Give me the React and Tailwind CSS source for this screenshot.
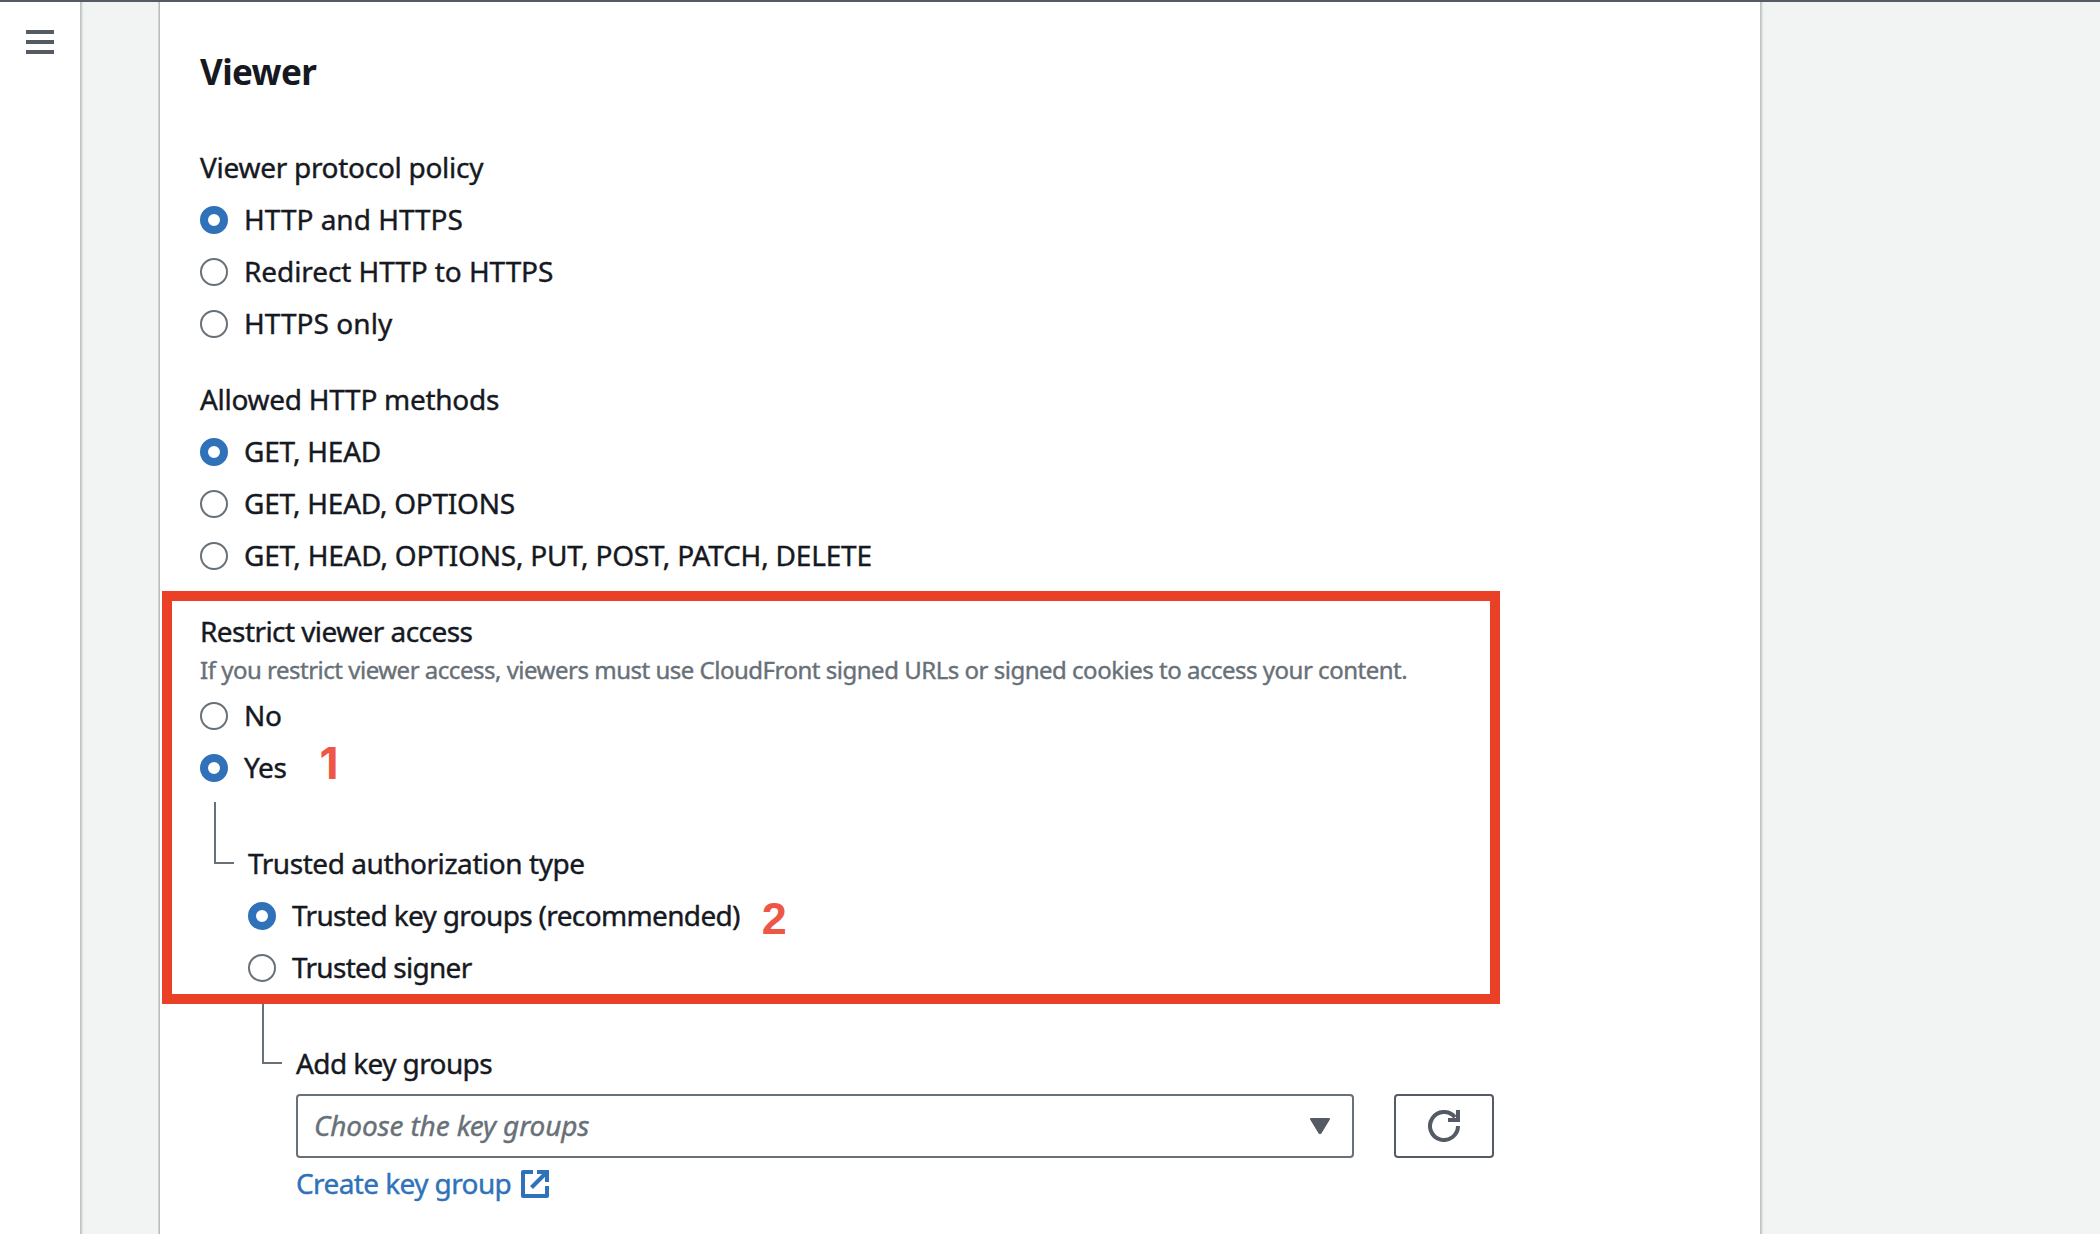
import React from "react";

function Radio({ checked }) {
  return checked ? (
    <span className="size-7 shrink-0 rounded-full border-8 border-[#2f72b9] bg-white" />
  ) : (
    <span className="size-7 shrink-0 rounded-full border-2 border-[#687078] bg-white" />
  );
}

function Option({ checked, label, className = "", children }) {
  return (
    <div className="flex h-[52px] items-center">
      <Radio checked={checked} />
      <span className={`ml-4 pb-0.5 ${className}`}>{label}</span>
      {children}
    </div>
  );
}

function Label({ children, className = "" }) {
  return <div className={`flex h-[52px] items-center pb-0.5 ${className}`}>{children}</div>;
}

function Nested({ children }) {
  return (
    <div className="flex">
      <span className="mt-2 mr-3.5 ml-3.5 h-[62px] w-5 shrink-0 border-b-2 border-l-2 border-[#687078]" />
      <div className="flex-1 pt-11">{children}</div>
    </div>
  );
}

export default function App() {
  return (
    <div className="flex h-[1234px] w-[2100px] flex-col overflow-hidden border-t-2 border-[#545b64] bg-[#f2f3f3] font-['Noto_Sans','Open_Sans',sans-serif] text-[28px] leading-10 whitespace-nowrap text-[#16191f] [-webkit-text-stroke:0.4px]">
      <div className="flex min-h-0 flex-1">
        <aside className="w-20 shrink-0 bg-white shadow-[1px_0_0_#bec4c6,2px_0_0_#ced2d3,3px_0_1px_#e3e6e6]">
          <div className="mt-7 ml-[26px] flex w-7 flex-col gap-1.5">
            <span className="h-1 bg-[#545b64]" />
            <span className="h-1 bg-[#545b64]" />
            <span className="h-1 bg-[#545b64]" />
          </div>
        </aside>
        <main className="relative ml-20 w-[1600px] shrink-0 bg-white pt-12 pl-10 shadow-[1px_0_0_#bec4c6,2px_0_0_#ced2d3,3px_0_1px_#e3e6e6,-1px_0_0_#b6bcbf,-2px_0_0_#d0d4d5]">
          <h2 className="mb-12 h-11 text-[35px] leading-[44px] font-bold tracking-[-0.6px] [-webkit-text-stroke:0]">Viewer</h2>

          <section className="mb-6">
            <Label className="tracking-[-0.28px]">Viewer protocol policy</Label>
            <Option checked label="HTTP and HTTPS" />
            <Option label="Redirect HTTP to HTTPS" className="tracking-[-0.08px]" />
            <Option label="HTTPS only" className="tracking-[0.05px]" />
          </section>

          <section className="mb-6">
            <Label className="tracking-[-0.28px]">Allowed HTTP methods</Label>
            <Option checked label="GET, HEAD" className="tracking-[-0.25px]" />
            <Option label="GET, HEAD, OPTIONS" className="tracking-[-0.25px]" />
            <Option label="GET, HEAD, OPTIONS, PUT, POST, PATCH, DELETE" className="tracking-[-0.19px]" />
          </section>

          <section>
            <Label className="tracking-[-0.57px]">Restrict viewer access</Label>
            <p className="mb-1.5 flex h-[26px] items-center pb-0.5 text-2xl tracking-[-0.49px] text-[#687078]">
              If you restrict viewer access, viewers must use CloudFront signed URLs or signed cookies to access your content.
            </p>
            <Option label="No" className="tracking-[-0.3px]" />
            <Option checked label="Yes" className="tracking-[-0.4px]">
              <span className="ml-[33px] -translate-y-[5px] font-['Inter',sans-serif] text-[44px] leading-none font-bold text-[#ee5645] [-webkit-text-stroke:0]">1</span>
            </Option>
            <Nested>
              <Label className="tracking-[-0.44px]">Trusted authorization type</Label>
              <Option checked label="Trusted key groups (recommended)" className="tracking-[-0.65px]">
                <span className="ml-[22px] translate-y-0.5 font-['Liberation_Sans',sans-serif] text-[45px] leading-none font-bold text-[#ee5645] [-webkit-text-stroke:0]">2</span>
              </Option>
              <Option label="Trusted signer" className="tracking-[-0.7px]" />
              <Nested>
                <Label className="tracking-[-0.6px]">Add key groups</Label>
                <div className="mt-1 flex gap-10">
                  <div className="flex h-16 w-[1058px] items-center justify-between rounded border-2 border-[#687078] pr-[22px] pl-4">
                    <span className="pb-0.5 tracking-[-0.15px] text-[#687078] italic">Choose the key groups</span>
                    <svg className="h-4 w-5" viewBox="0 0 20 16" fill="#545b64" stroke="#545b64" strokeWidth="2" strokeLinejoin="round">
                      <path d="M1 1h18l-8.500 14h-1z" />
                    </svg>
                  </div>
                  <button className="flex h-16 w-[100px] items-center justify-center rounded border-2 border-[#545b64]">
                    <svg className="size-8" viewBox="0 0 32 32" fill="none" stroke="#545b64" strokeWidth="4">
                      <path d="M30 16A14 14 0 1 1 27 7.300" />
                      <path d="M30 0v10H20" />
                    </svg>
                  </button>
                </div>
                <a className="flex h-[52px] items-center text-[#2f72b9]">
                  <span className="pb-0.5 tracking-[-0.6px]">Create key group</span>
                  <svg className="ml-2.5 size-7" viewBox="0 0 28 28" fill="none" stroke="currentColor" strokeWidth="4">
                    <path d="M12 2H2v24h24V16" strokeLinejoin="round" />
                    <path d="M16 2h10v10" />
                    <path d="M26 2 10.500 17.500" />
                  </svg>
                </a>
              </Nested>
            </Nested>
          </section>

          <div className="pointer-events-none absolute top-[589px] left-[2px] h-[413px] w-[1338px] border-10 border-[#ea4026]" />
        </main>
      </div>
    </div>
  );
}
